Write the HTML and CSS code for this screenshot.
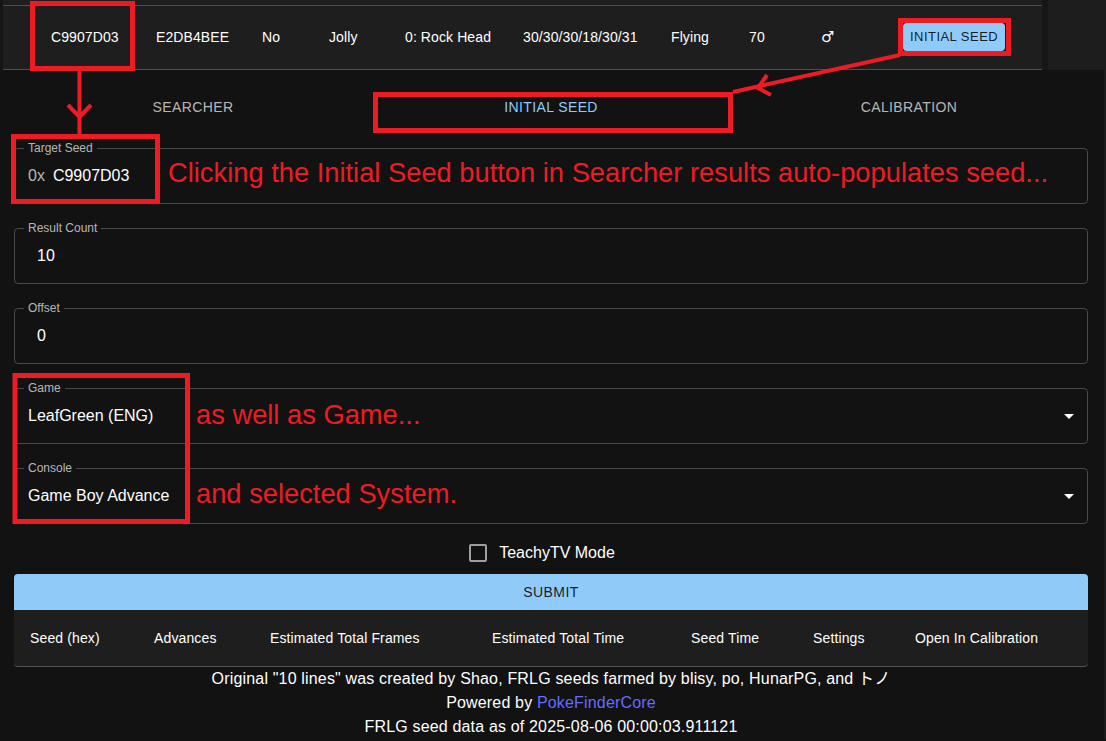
FILE: index.html
```html
<!DOCTYPE html>
<html lang="en">
<head>
<meta charset="utf-8">
<title>FRLG Initial Seed</title>
<link rel="stylesheet" href="styles.css">
</head>
<body>
<div class="snapshot">
  <div class="snapshot-edge"></div>
  <div class="snapshot-main">
    <div class="result-row">
      <span class="cell">C9907D03</span>
      <span class="cell">E2DB4BEE</span>
      <span class="cell">No</span>
      <span class="cell">Jolly</span>
      <span class="cell">0: Rock Head</span>
      <span class="cell">30/30/30/18/30/31</span>
      <span class="cell">Flying</span>
      <span class="cell">70</span>
      <span class="cell gender">♂</span>
      <span class="cell"><button class="row-btn" type="button">Initial Seed</button></span>
    </div>
  </div>
  <div class="snapshot-gap"></div>
  <div class="snapshot-side"></div>
</div>

<div class="app">
  <main class="content">
    <nav class="tabs">
      <div class="tab">Searcher</div>
      <div class="tab active">Initial Seed</div>
      <div class="tab">Calibration</div>
    </nav>

    <form class="form">
      <div class="fields">
        <fieldset class="field">
          <legend>Target Seed</legend>
          <div class="field-body">
            <span class="prefix">0x</span><span class="value">C9907D03</span>
          </div>
        </fieldset>
        <fieldset class="field">
          <legend>Result Count</legend>
          <div class="field-body">
            <span class="value number">10</span>
          </div>
        </fieldset>
        <fieldset class="field">
          <legend>Offset</legend>
          <div class="field-body">
            <span class="value number">0</span>
          </div>
        </fieldset>
        <fieldset class="field">
          <legend>Game</legend>
          <div class="field-body">
            <span class="value">LeafGreen (ENG)</span>
            <svg class="caret" width="24" height="24" viewBox="0 0 24 24"><path d="M7 10l5 5 5-5z" fill="#ffffff"/></svg>
          </div>
        </fieldset>
        <fieldset class="field">
          <legend>Console</legend>
          <div class="field-body">
            <span class="value">Game Boy Advance</span>
            <svg class="caret" width="24" height="24" viewBox="0 0 24 24"><path d="M7 10l5 5 5-5z" fill="#ffffff"/></svg>
          </div>
        </fieldset>
      </div>

      <label class="check-row">
        <span class="checkbox"></span>
        <span class="check-label">TeachyTV Mode</span>
      </label>

      <button class="submit" type="button">Submit</button>
    </form>

    <div class="results">
      <div class="results-head">
        <span class="th">Seed (hex)</span>
        <span class="th">Advances</span>
        <span class="th">Estimated Total Frames</span>
        <span class="th">Estimated Total Time</span>
        <span class="th">Seed Time</span>
        <span class="th">Settings</span>
        <span class="th">Open In Calibration</span>
      </div>
    </div>

    <footer class="footer">
      <p>Original "10 lines" was created by Shao, FRLG seeds farmed by blisy, po, HunarPG, and トノ</p>
      <p>Powered by <a href="#">PokeFinderCore</a></p>
      <p>FRLG seed data as of 2025-08-06 00:00:03.911121</p>
    </footer>
  </main>
  <div class="rail"></div>
</div>

<svg class="marks" width="1106" height="741" viewBox="0 0 1106 741" aria-hidden="true">
  <g fill="none" stroke="#ed1c24" stroke-width="5">
    <rect x="32.5" y="3.5" width="100" height="65"/>
    <rect x="900.5" y="20.5" width="108" height="33"/>
    <rect x="375.5" y="94.5" width="355" height="36"/>
    <rect x="13.5" y="136.5" width="144" height="65"/>
    <rect x="15" y="375.5" width="172.5" height="146"/>
  </g>
  <g fill="none" stroke="#ed1c24" stroke-width="4">
    <line x1="79.5" y1="70" x2="79.5" y2="134"/>
    <polyline points="68,105 79.5,117 91,105"/>
    <line x1="900" y1="55" x2="733" y2="92"/>
    <polyline points="767,75 758,88 771,95"/>
  </g>
</svg>

<div class="note note-seed">Clicking the Initial Seed button in Searcher results auto-populates seed...</div>
<div class="note note-game">as well as Game...</div>
<div class="note note-system">and selected System.</div>
</body>
</html>
```

FILE: styles.css
```css
* {
  box-sizing: border-box;
}

html,
body {
  margin: 0;
  padding: 0;
}

body {
  position: relative;
  min-height: 741px;
  background: #121212;
  color: rgba(255, 255, 255, 0.87);
  font-family: "Liberation Sans", Arial, "Noto Sans CJK JP", sans-serif;
  overflow: hidden;
}

/* pasted snapshot of the searcher results row */
.snapshot {
  display: flex;
  height: 70px;
}

.snapshot-edge {
  width: 3px;
  background: #151515;
}

.snapshot-main {
  width: 1039px;
  padding-top: 5px;
  background: #1e1e1e;
}

.snapshot-gap {
  width: 6px;
  background: #171717;
}

.snapshot-side {
  flex: 1;
  background: #1d1d1d;
}

.result-row {
  display: grid;
  grid-template-columns: 105px 106px 67px 76px 118px 148px 78px 72px 82px auto;
  align-items: center;
  height: 65px;
  padding-left: 48px;
  padding-bottom: 2px;
  border-top: 1px solid #4f4f4f;
  border-bottom: 1px solid #4f4f4f;
  font-size: 14px;
  letter-spacing: 0.1px;
  color: #ffffff;
}

.cell {
  white-space: nowrap;
}

.gender {
  font-family: "DejaVu Sans", sans-serif;
  font-size: 15px;
}

.row-btn {
  height: 28px;
  padding: 0 7px;
  border: 0;
  border-radius: 4px;
  background: #90caf9;
  color: rgba(0, 0, 0, 0.87);
  font-family: inherit;
  font-size: 13px;
  letter-spacing: 0.46px;
  text-transform: uppercase;
}

/* main app */
.app {
  display: flex;
}

.content {
  width: 1074px;
  margin-left: 14px;
}

.rail {
  width: 2px;
  margin-left: auto;
  background: #1c1c1c;
}

.tabs {
  display: grid;
  grid-template-columns: repeat(3, 1fr);
  height: 48px;
  margin-top: 13px;
}

.tab {
  display: flex;
  align-items: center;
  justify-content: center;
  font-size: 14px;
  letter-spacing: 0.4px;
  text-transform: uppercase;
  color: rgba(255, 255, 255, 0.7);
}

.tab.active {
  color: #90caf9;
}

.form {
  margin-top: 11px;
}

.fields {
  display: flex;
  flex-direction: column;
  gap: 18px;
}

.field {
  height: 62px;
  min-width: 0;
  margin: 0;
  padding: 12px 13px 0;
  border: 1px solid #4a4a4a;
  border-radius: 4px;
}

.field legend {
  margin-left: -4px;
  padding: 0 4px;
  font-size: 12px;
  line-height: 12px;
  color: rgba(255, 255, 255, 0.7);
}

.field-body {
  display: flex;
  align-items: center;
  height: 19px;
}

.prefix {
  margin-right: 8px;
  font-size: 16px;
  color: rgba(255, 255, 255, 0.7);
}

.value {
  font-size: 16px;
  color: #ffffff;
}

.value.number {
  margin-left: 9px;
}

.caret {
  flex: none;
  margin-left: auto;
  margin-right: -7px;
}

.check-row {
  display: flex;
  align-items: center;
  justify-content: center;
  gap: 12px;
  height: 22px;
  margin-top: 18px;
}

.checkbox {
  width: 18px;
  height: 18px;
  border: 2px solid rgba(255, 255, 255, 0.6);
  border-radius: 2px;
}

.check-label {
  margin-right: 18px;
  font-size: 16px;
  color: #ffffff;
}

.submit {
  display: block;
  width: 100%;
  height: 36px;
  margin-top: 10px;
  border: 0;
  border-radius: 4px 4px 0 0;
  background: #90caf9;
  color: rgba(0, 0, 0, 0.87);
  font-family: inherit;
  font-size: 14px;
  letter-spacing: 0.4px;
  text-transform: uppercase;
}

.results {
  background: #1e1e1e;
  border-radius: 0 0 4px 4px;
}

.results-head {
  display: grid;
  grid-template-columns: 124px 116px 222px 199px 122px 102px 189px;
  align-items: center;
  height: 57px;
  border-bottom: 1px solid #515151;
  border-radius: 0 0 4px 4px;
}

.th {
  padding-left: 16px;
  font-size: 14px;
  letter-spacing: 0.13px;
  color: #ffffff;
  white-space: nowrap;
}

.footer {
  text-align: center;
  font-size: 16px;
  line-height: 24px;
  letter-spacing: 0.17px;
  color: #ffffff;
}

.footer p {
  margin: 0;
}

.footer a {
  color: #646cff;
  text-decoration: none;
}

/* annotation overlay */
.marks {
  position: absolute;
  top: 0;
  left: 0;
  pointer-events: none;
}

.note {
  position: absolute;
  font-size: 27.3px;
  line-height: 27px;
  color: #ed1c24;
  white-space: nowrap;
}

.note-seed {
  left: 168px;
  top: 159px;
}

.note-game {
  left: 196px;
  top: 401px;
}

.note-system {
  left: 196px;
  top: 480px;
}
```
